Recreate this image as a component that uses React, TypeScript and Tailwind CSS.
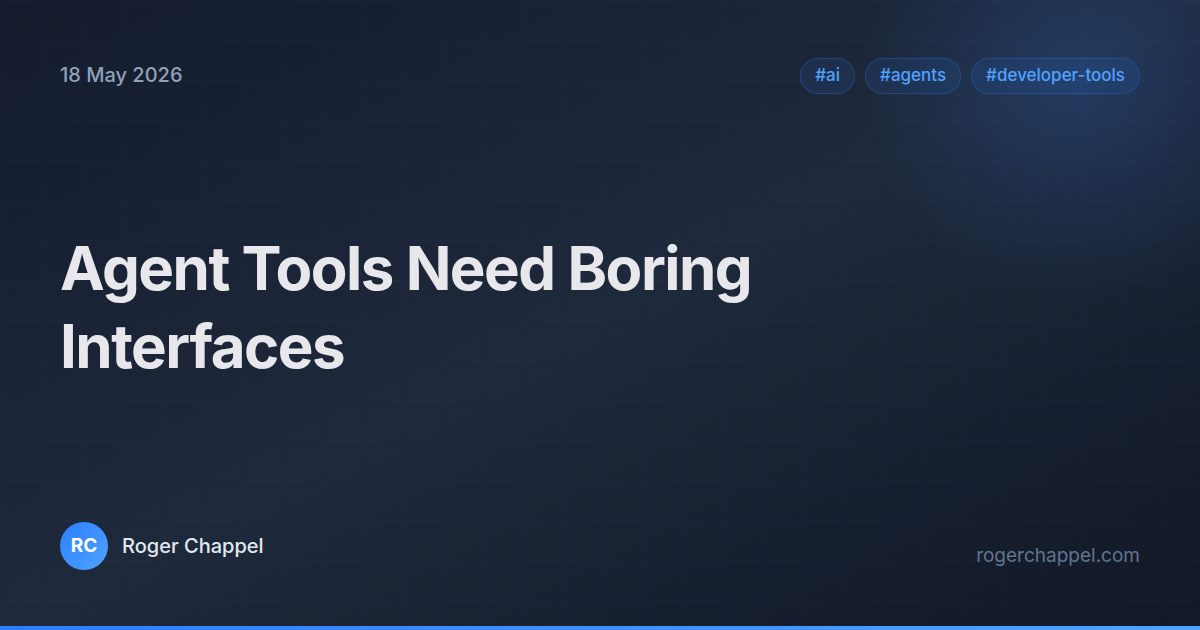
export default function App() {
  return (
    <div
      className="relative flex h-[630px] w-[1200px] flex-col overflow-hidden bg-gradient-to-br from-[#141c2e] via-[#1e293b] to-[#111827] px-[60px] pb-[60px] pt-[58px] text-white"
      style={{ fontFamily: 'Inter, "Noto Sans", sans-serif' }}
    >
      <div className="pointer-events-none absolute inset-0 bg-[linear-gradient(rgba(59,130,246,0.03)_1px,transparent_1px),linear-gradient(90deg,rgba(59,130,246,0.03)_1px,transparent_1px)] bg-[size:40px_40px]" />
      <div className="pointer-events-none absolute -right-[120px] -top-[160px] h-[480px] w-[480px] rounded-full bg-[radial-gradient(circle,rgba(59,130,246,0.2),transparent_65%)]" />

      <div className="relative flex items-start justify-between">
        <div className="pt-[2px] text-[20px] font-medium text-slate-400">18 May 2026</div>
        <div className="flex gap-[10px]">
          {['#ai', '#agents', '#developer-tools'].map((t) => (
            <span
              key={t}
              className="rounded-full border border-blue-500/25 bg-blue-500/10 px-[14px] py-[4px] text-[17px] font-medium text-blue-400"
            >
              {t}
            </span>
          ))}
        </div>
      </div>

      <div className="relative flex flex-1 items-center">
        <h1 className="mt-[-2px] text-[60px] font-bold leading-[78px] tracking-[-1.5px] text-[#e8e8ec]">
          Agent Tools Need Boring
          <br />
          Interfaces
        </h1>
      </div>

      <div className="relative flex items-end justify-between">
        <div className="flex items-center gap-[14px]">
          <div className="flex h-[48px] w-[48px] items-center justify-center rounded-full bg-gradient-to-br from-blue-500 to-blue-400 text-[19px] font-bold">
            RC
          </div>
          <span className="text-[20px] font-medium text-slate-200">Roger Chappel</span>
        </div>
        <span className="text-[19px] text-slate-500">rogerchappel.com</span>
      </div>

      <div className="absolute bottom-0 left-0 h-[4px] w-full bg-gradient-to-r from-blue-500 to-blue-400" />
    </div>
  );
}
